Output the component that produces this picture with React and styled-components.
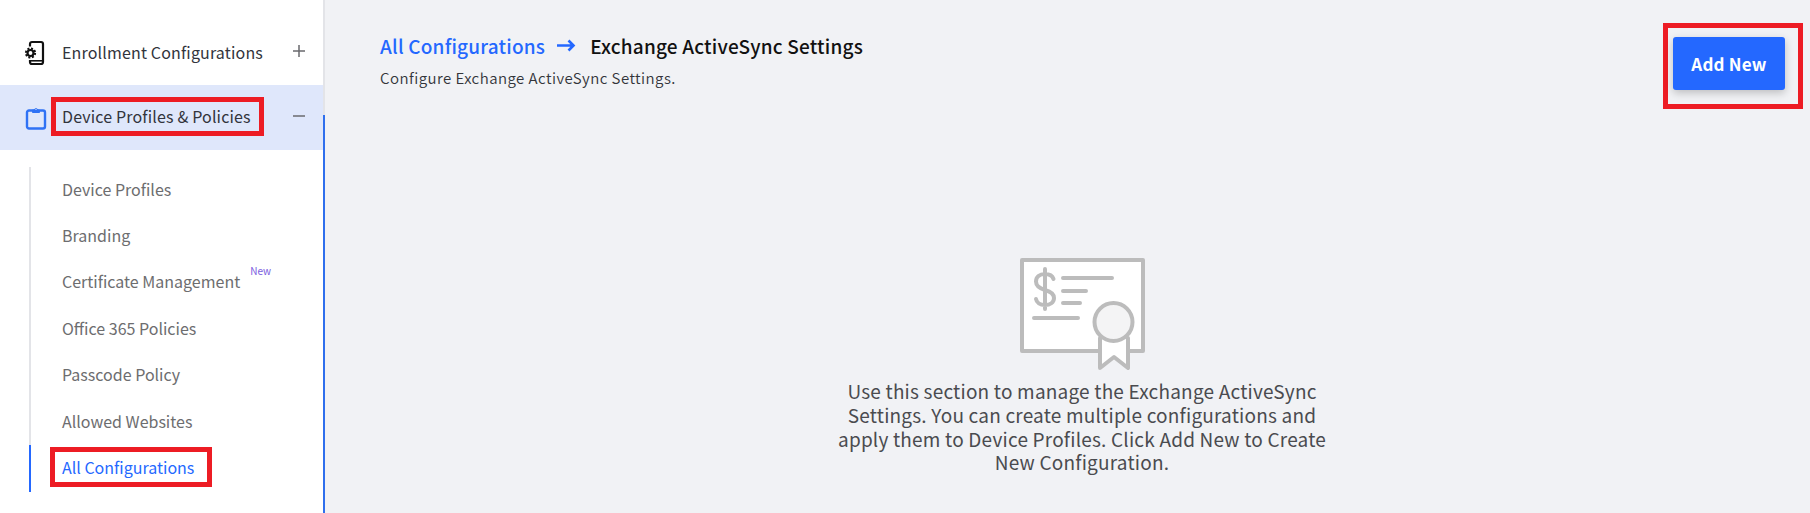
import React from "react";
import styled, { createGlobalStyle } from "styled-components";

const Global = createGlobalStyle`
  html, body { margin: 0; padding: 0; height: 513px; overflow: hidden; background: #f1f2f5; }
  * { box-sizing: border-box; }
  body { font-family: "Noto Sans CJK KR", "Noto Sans", sans-serif; }
`;

const Shell = styled.div`
  display: flex;
  width: 1810px;
  height: 513px;
  overflow: hidden;
`;
const Sidebar = styled.aside`
  width: 325px;
  flex: none;
  background: #fff;
  padding-top: 20px;
  border-right: 2px solid #e3e4e8;
  position: relative;
`;
const ActiveEdge = styled.span`
  position: absolute;
  right: -2px;
  top: 115px;
  bottom: 0;
  width: 2px;
  background: #2f6fed;
`;
const Row = styled.div`
  height: 65px;
  display: flex;
  align-items: center;
  padding: 0 17px 0 25px;
  background: ${p => (p.$active ? "#dfe7fb" : "transparent")};
  color: #32343c;
  font-size: 16px;
  letter-spacing: 0.16px;
`;
const RowIcon = styled.span`
  width: 22px;
  height: 26px;
  margin-right: 15px;
  display: flex;
  align-items: center;
  justify-content: center;
  flex: none;
`;
const Label = styled.span`
  flex: 1;
  padding-bottom: 2px;
`;
const Highlight = styled.span`
  display: inline-block;
  height: ${p => p.$h}px;
  line-height: ${p => p.$h - 10}px;
  padding: 0 ${p => p.$right}px 0 ${p => p.$left}px;
  margin-left: ${p => -(p.$left + 5)}px;
  border: 5px solid #ed1c24;
`;
const Toggle = styled.svg`
  width: 14px;
  height: 14px;
  flex: none;
  margin-top: -4px;
`;
const SubList = styled.ul`
  list-style: none;
  margin: 17px 0 0 29px;
  padding: 0;
  border-left: 2px solid #e3e4e8;
`;
const SubItem = styled.li`
  height: 46.4px;
  display: flex;
  align-items: center;
  padding: 0 0 3px 31px;
  margin-left: -2px;
  border-left: 2px solid ${p => (p.$active ? "#2468ff" : "transparent")};
  font-size: 16px;
  color: ${p => (p.$active ? "#2468ff" : "#6d6d6f")};
`;
const NewTag = styled.span`
  font-size: 10px;
  color: #7a5ce0;
  margin-left: 10px;
  position: relative;
  top: -10px;
  line-height: 1;
`;
const Main = styled.main`
  flex: 1;
  display: flex;
  flex-direction: column;
  padding: 0 7px 0 55px;
`;
const Header = styled.header`
  display: flex;
  justify-content: space-between;
  align-items: flex-start;
  padding-top: 23px;
`;
const Titles = styled.div`
  padding-top: 9px;
`;
const Crumbs = styled.div`
  display: flex;
  align-items: center;
  height: 27px;
  font-size: 19px;
  letter-spacing: 0.2px;
  font-weight: 500;
`;
const CrumbLink = styled.span`
  color: #2468ff;
`;
const CrumbCurrent = styled.span`
  color: #111;
`;
const Arrow = styled.svg`
  width: 20px;
  height: 16px;
  margin: 0 14px 0 11px;
`;
const Sub = styled.p`
  margin: 8px 0 0;
  font-size: 15px;
  letter-spacing: 0.45px;
  font-weight: 350;
  color: #33353a;
`;
const ButtonFrame = styled.div`
  border: 5px solid #ed1c24;
  padding: 9px 13px 14px 5px;
`;
const AddButton = styled.button`
  display: block;
  width: 112px;
  height: 53px;
  border: none;
  border-radius: 3px;
  background: #2468ff;
  color: #fff;
  font: 700 17px "Noto Sans CJK KR", "Noto Sans", sans-serif;
  letter-spacing: 0.2px;
  box-shadow: 0 3px 8px rgba(0, 0, 0, 0.22);
`;
const Empty = styled.section`
  display: flex;
  flex-direction: column;
  align-items: center;
  width: 500px;
  margin: 149px 0 0 452px;
`;
const EmptyText = styled.p`
  margin: 9px 0 0;
  font-size: 19px;
  letter-spacing: 0.2px;
  line-height: 23.8px;
  color: #4a4b4f;
  text-align: center;
`;
const IconSvg = styled.svg`
  overflow: visible;
`;

const Certificate = () => (
  <svg width="125" height="112" viewBox="0 0 125 112" fill="none" stroke="#bcbcbc" strokeWidth="4" strokeLinecap="round" strokeLinejoin="round">
    <path d="M80 93H2V2h121v91h-15" fill="#fff" />
    <path d="M80 80v30l14-11 14 11V80" fill="#fff" />
    <circle cx="93.500" cy="64" r="19" fill="#f4f4f5" />
    <path d="M43 20h49M43 33h23M43 45h17M14 60h44" />
    <path d="M25 11v40M33.500 21c-1-3-4-5-8.500-5-5.500 0-9 3-9 7.500 0 5 4 7 9 8.500 5.500 1.500 9 3.500 9 8 0 4.500-4 7-9 7-5 0-8.500-2.500-9-6" />
  </svg>
);

const PhoneGear = () => (
  <IconSvg width="20" height="24" viewBox="0 0 20 24">
    <path d="M4 5.500V3a2 2 0 0 1 2-2h9a2 2 0 0 1 2 2v18a2 2 0 0 1-2 2H6a2 2 0 0 1-2-2v-2" fill="none" stroke="#111" strokeWidth="2.200" />
    <path d="M4 19.800h12" stroke="#111" strokeWidth="1.600" fill="none" />
    <circle cx="4.500" cy="12" r="4.600" fill="none" stroke="#111" strokeWidth="2" strokeDasharray="2 1.600" />
    <circle cx="4.500" cy="12" r="3" fill="none" stroke="#111" strokeWidth="2.200" />
  </IconSvg>
);

const Clipboard = () => (
  <IconSvg width="20" height="24" viewBox="0 0 20 24" fill="none" stroke="#2f72f5" strokeWidth="2.400" strokeLinejoin="round">
    <rect x="1" y="4.500" width="18" height="18" rx="2" />
    <path d="M6.500 4h2a1.500 1.500 0 0 1 3 0h2v2.500h-7z" fill="#2f72f5" strokeWidth="1" />
    <circle cx="10" cy="3.200" r=".7" fill="#dfe7fb" stroke="none" />
  </IconSvg>
);

const items = ["Device Profiles", "Branding", "Certificate Management", "Office 365 Policies", "Passcode Policy", "Allowed Websites", "All Configurations"];

export default function App() {
  return (
    <Shell>
      <Global />
      <Sidebar>
        <ActiveEdge />
        <Row>
          <RowIcon><PhoneGear /></RowIcon>
          <Label>Enrollment Configurations</Label>
          <Toggle viewBox="0 0 14 14"><path d="M7 1v12M1 7h12" stroke="#6a6a6e" strokeWidth="1.500" /></Toggle>
        </Row>
        <Row $active>
          <RowIcon><Clipboard /></RowIcon>
          <Label><Highlight $h={39} $left={6} $right={8}>Device Profiles &amp; Policies</Highlight></Label>
          <Toggle viewBox="0 0 14 14"><path d="M1 7h12" stroke="#6a6a6e" strokeWidth="1.500" /></Toggle>
        </Row>
        <SubList>
          {items.map(t => {
            const active = t === "All Configurations";
            return (
              <SubItem key={t} $active={active}>
                {active ? <Highlight $h={40} $left={7} $right={13}>{t}</Highlight> : t}
                {t === "Certificate Management" && <NewTag>New</NewTag>}
              </SubItem>
            );
          })}
        </SubList>
      </Sidebar>
      <Main>
        <Header>
          <Titles>
            <Crumbs>
              <CrumbLink>All Configurations</CrumbLink>
              <Arrow viewBox="0 0 20 16"><path d="M1 7.500h16.500M12.500 2.500l5 5-5 5" fill="none" stroke="#2468ff" strokeWidth="2.600" /></Arrow>
              <CrumbCurrent>Exchange ActiveSync Settings</CrumbCurrent>
            </Crumbs>
            <Sub>Configure Exchange ActiveSync Settings.</Sub>
          </Titles>
          <ButtonFrame><AddButton>Add New</AddButton></ButtonFrame>
        </Header>
        <Empty>
          <Certificate />
          <EmptyText>
            Use this section to manage the Exchange ActiveSync Settings. You can create multiple configurations and apply them to Device Profiles. Click Add New to Create New Configuration.
          </EmptyText>
        </Empty>
      </Main>
    </Shell>
  );
}
